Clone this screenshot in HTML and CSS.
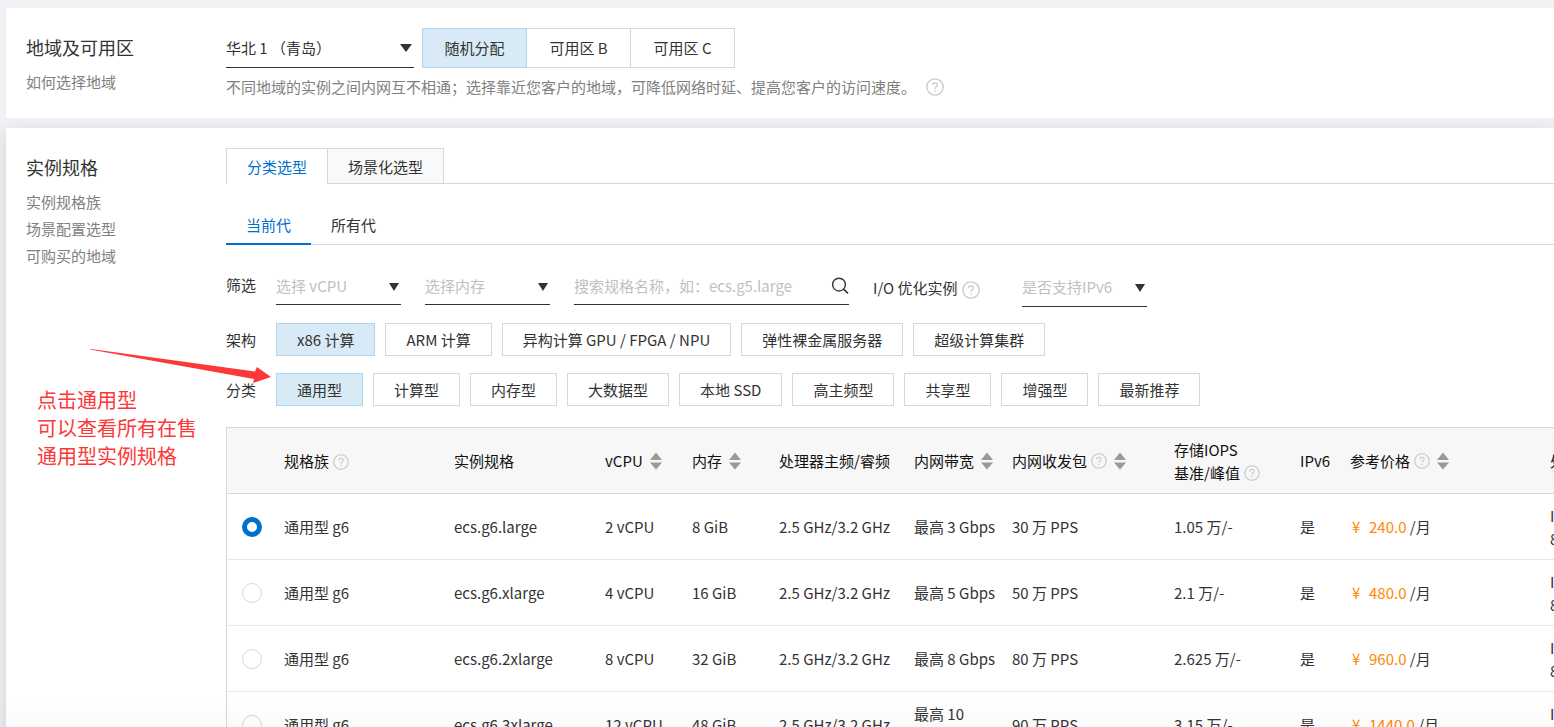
FILE: index.html
```html
<!DOCTYPE html>
<html lang="zh-CN">
<head>
    <meta charset="UTF-8">
    <meta name="viewport" content="width=device-width, initial-scale=1.0">
    <title>实例规格</title>
    <link rel="stylesheet" href="styles.css">
</head>
<body>
    <!-- Shared icons -->
    <svg class="sprite" aria-hidden="true">
        <symbol id="icon-help" viewBox="0 0 18 18">
            <circle cx="9" cy="9" r="8.2" fill="none" stroke="currentColor" stroke-width="1.3"/>
            <path d="M6.6 7.2c0-1.5 1-2.4 2.4-2.4s2.4.9 2.4 2.1c0 1.9-2.4 1.9-2.4 4" fill="none" stroke="currentColor" stroke-width="1.2"/>
            <circle cx="9" cy="13" r=".8" fill="currentColor"/>
        </symbol>
        <symbol id="icon-sort" viewBox="0 0 12 18">
            <path d="M6 .5l6 7.5H0zM6 17.5l6-7H0z" fill="currentColor"/>
        </symbol>
    </svg>

    <div class="page">
        <section class="panel region">
            <div class="panel-label">
                <h2>地域及可用区</h2>
                <a href="#">如何选择地域</a>
            </div>
            <div class="panel-body">
                <div class="region-row">
                    <div class="dropdown region-select">
                        <select aria-label="地域">
                            <option>华北 1 （青岛）</option>
                        </select>
                    </div>
                    <div class="zones">
                        <button type="button" class="zone active">随机分配</button>
                        <button type="button" class="zone">可用区 B</button>
                        <button type="button" class="zone">可用区 C</button>
                    </div>
                </div>
                <p class="hint">不同地域的实例之间内网互不相通；选择靠近您客户的地域，可降低网络时延、提高您客户的访问速度。<svg class="help"><use href="#icon-help"/></svg></p>
            </div>
        </section>

        <section class="panel spec">
            <div class="panel-label">
                <h2>实例规格</h2>
                <a href="#">实例规格族</a>
                <a href="#">场景配置选型</a>
                <a href="#">可购买的地域</a>
            </div>
            <div class="panel-body">
                <div class="tabs">
                    <button type="button" class="tab active">分类选型</button>
                    <button type="button" class="tab">场景化选型</button>
                </div>
                <div class="subtabs">
                    <button type="button" class="subtab active">当前代</button>
                    <button type="button" class="subtab">所有代</button>
                </div>

                <div class="filters">
                    <span class="row-label">筛选</span>
                    <div class="dropdown filter-select">
                        <select aria-label="选择 vCPU"><option>选择 vCPU</option></select>
                    </div>
                    <div class="dropdown filter-select">
                        <select aria-label="选择内存"><option>选择内存</option></select>
                    </div>
                    <div class="search">
                        <input type="text" aria-label="搜索规格名称" placeholder="搜索规格名称，如：ecs.g5.large">
                        <svg class="search-icon" viewBox="0 0 18 18">
                            <circle cx="8" cy="7.6" r="6.4" fill="none" stroke="#333" stroke-width="1.4"/>
                            <path d="M12.6 12.2l4.4 4.2" stroke="#333" stroke-width="1.6"/>
                        </svg>
                    </div>
                    <span class="io">I/O 优化实例<svg class="help"><use href="#icon-help"/></svg></span>
                    <div class="dropdown filter-select ipv6">
                        <select aria-label="是否支持IPv6"><option>是否支持IPv6</option></select>
                    </div>
                </div>

                <div class="options">
                    <span class="row-label">架构</span>
                    <button type="button" class="option active">x86 计算</button>
                    <button type="button" class="option">ARM 计算</button>
                    <button type="button" class="option">异构计算 GPU / FPGA / NPU</button>
                    <button type="button" class="option">弹性裸金属服务器</button>
                    <button type="button" class="option">超级计算集群</button>
                </div>
                <div class="options">
                    <span class="row-label">分类</span>
                    <button type="button" class="option active">通用型</button>
                    <button type="button" class="option">计算型</button>
                    <button type="button" class="option">内存型</button>
                    <button type="button" class="option">大数据型</button>
                    <button type="button" class="option">本地 SSD</button>
                    <button type="button" class="option">高主频型</button>
                    <button type="button" class="option">共享型</button>
                    <button type="button" class="option">增强型</button>
                    <button type="button" class="option">最新推荐</button>
                </div>

                <div class="table-wrap">
                    <table>
                        <colgroup>
                            <col class="c-radio"><col class="c-family"><col class="c-type"><col class="c-num"><col class="c-num">
                            <col class="c-cpu"><col class="c-band"><col class="c-pps"><col class="c-iops"><col class="c-ipv6">
                            <col class="c-price"><col class="c-model">
                        </colgroup>
                        <thead>
                            <tr>
                                <th></th>
                                <th>规格族<svg class="help small"><use href="#icon-help"/></svg></th>
                                <th>实例规格</th>
                                <th>vCPU<svg class="sort"><use href="#icon-sort"/></svg></th>
                                <th>内存<svg class="sort"><use href="#icon-sort"/></svg></th>
                                <th>处理器主频/睿频</th>
                                <th>内网带宽<svg class="sort"><use href="#icon-sort"/></svg></th>
                                <th>内网收发包<svg class="help small"><use href="#icon-help"/></svg><svg class="sort"><use href="#icon-sort"/></svg></th>
                                <th>存储IOPS<br>基准/峰值<svg class="help small"><use href="#icon-help"/></svg></th>
                                <th>IPv6</th>
                                <th>参考价格<svg class="help small"><use href="#icon-help"/></svg><svg class="sort"><use href="#icon-sort"/></svg></th>
                                <th>处理器型号</th>
                            </tr>
                        </thead>
                        <tbody>
                            <tr>
                                <td><input type="radio" name="spec" aria-label="ecs.g6.large" checked></td>
                                <td>通用型 g6</td>
                                <td>ecs.g6.large</td>
                                <td>2 vCPU</td>
                                <td>8 GiB</td>
                                <td>2.5 GHz/3.2 GHz</td>
                                <td>最高 3 Gbps</td>
                                <td>30 万 PPS</td>
                                <td>1.05 万/-</td>
                                <td>是</td>
                                <td><span class="price"><span class="yen">¥</span>240.0</span> /月</td>
                                <td>Intel Xeon(Cascade Lake) Platinum<br>8269CY</td>
                            </tr>
                            <tr>
                                <td><input type="radio" name="spec" aria-label="ecs.g6.xlarge"></td>
                                <td>通用型 g6</td>
                                <td>ecs.g6.xlarge</td>
                                <td>4 vCPU</td>
                                <td>16 GiB</td>
                                <td>2.5 GHz/3.2 GHz</td>
                                <td>最高 5 Gbps</td>
                                <td>50 万 PPS</td>
                                <td>2.1 万/-</td>
                                <td>是</td>
                                <td><span class="price"><span class="yen">¥</span>480.0</span> /月</td>
                                <td>Intel Xeon(Cascade Lake) Platinum<br>8269CY</td>
                            </tr>
                            <tr>
                                <td><input type="radio" name="spec" aria-label="ecs.g6.2xlarge"></td>
                                <td>通用型 g6</td>
                                <td>ecs.g6.2xlarge</td>
                                <td>8 vCPU</td>
                                <td>32 GiB</td>
                                <td>2.5 GHz/3.2 GHz</td>
                                <td>最高 8 Gbps</td>
                                <td>80 万 PPS</td>
                                <td>2.625 万/-</td>
                                <td>是</td>
                                <td><span class="price"><span class="yen">¥</span>960.0</span> /月</td>
                                <td>Intel Xeon(Cascade Lake) Platinum<br>8269CY</td>
                            </tr>
                            <tr>
                                <td><input type="radio" name="spec" aria-label="ecs.g6.3xlarge"></td>
                                <td>通用型 g6</td>
                                <td>ecs.g6.3xlarge</td>
                                <td>12 vCPU</td>
                                <td>48 GiB</td>
                                <td>2.5 GHz/3.2 GHz</td>
                                <td>最高 10 Gbps</td>
                                <td>90 万 PPS</td>
                                <td>3.15 万/-</td>
                                <td>是</td>
                                <td><span class="price"><span class="yen">¥</span>1440.0</span> /月</td>
                                <td>Intel Xeon(Cascade Lake) Platinum<br>8269CY</td>
                            </tr>
                        </tbody>
                    </table>
                </div>
            </div>

            <!-- Red callout pointing at the 通用型 button -->
            <div class="callout">
                <svg class="callout-arrow" viewBox="0 0 182 36">
                    <path d="M0 .5L1 0 165 22.5 167 18 181 28 163 34 164 30Z" fill="#fc3838"/>
                </svg>
                <p>点击通用型<br>可以查看所有在售<br>通用型实例规格</p>
            </div>
        </section>
    </div>
    <div class="bottom-shade"></div>
</body>
</html>
```

FILE: styles.css
```css
* {
    box-sizing: border-box;
}
body {
    margin: 0;
    background-color: #eff1f5;
    color: #333;
    font-family: "Noto Sans CJK SC", sans-serif;
    font-size: 15px;
    line-height: 23px;
}
button, input, select {
    font: inherit;
    color: inherit;
}
button {
    cursor: pointer;
    background: white;
    white-space: nowrap;
}
a {
    color: #808080;
    text-decoration: none;
}
.sprite {
    display: none;
}
.page {
    height: 100vh;
    padding: 8px 0 0 6px;
    overflow: hidden;
}
.panel {
    display: grid;
    grid-template-columns: 200px minmax(0, 1fr);
    position: relative;
    padding: 20px 0 20px 20px;
    background: white;
}
.region {
    z-index: 1;
    margin-bottom: 10px;
}
.spec {
    box-shadow: 0 4px 16px rgba(0, 0, 0, 0.12);
}
.panel-label h2 {
    margin: 0 0 2px;
    font-size: 18px;
    font-weight: normal;
    line-height: 38px;
}
.panel-label a {
    display: block;
    line-height: 27px;
}

/* Dropdowns */
.dropdown {
    position: relative;
    border-bottom: 1px solid #333;
}
.dropdown select {
    width: 100%;
    height: 100%;
    padding: 0;
    border: none;
    background: none;
    appearance: none;
}
.dropdown::after {
    content: "";
    position: absolute;
    top: 50%;
    right: 2px;
    margin-top: -4px;
    border: 6px solid transparent;
    border-top: 8px solid #333;
    border-bottom: none;
    pointer-events: none;
}
.region-row {
    display: flex;
    gap: 8px;
}
.region-select {
    width: 188px;
    height: 40px;
}
.zones {
    display: flex;
}
.zone {
    width: 105px;
    height: 40px;
    padding: 0 0 2px;
    border: 1px solid #d8d8d8;
}
.zone + .zone {
    margin-left: -1px;
}
.zone.active, .option.active {
    position: relative;
    border-color: #b0d4ee;
    background: #d8eaf6;
}
.hint {
    display: flex;
    align-items: center;
    margin: 8px 0 0;
    color: #808080;
    line-height: 22px;
}
.hint .help {
    margin-left: 10px;
}
.help {
    flex: none;
    width: 18px;
    height: 18px;
    color: #c8c8c8;
    vertical-align: middle;
}
.help.small {
    width: 16px;
    height: 16px;
    margin-bottom: 2px;
    margin-left: 4px;
}
.sort {
    width: 12px;
    height: 18px;
    margin-bottom: 2px;
    margin-left: 7px;
    color: #999;
    vertical-align: middle;
}

/* Tabs */
.tabs {
    display: flex;
    height: 36px;
    border-bottom: 1px solid #d8d8d8;
}
.tab {
    height: 36px;
    padding: 0 20px;
    border: 1px solid #d8d8d8;
    background: #f9f9f9;
}
.tab + .tab {
    margin-left: -1px;
}
.tab.active {
    border-bottom-color: white;
    background: white;
    color: #0070cc;
}
.subtabs {
    display: flex;
    height: 39px;
    margin-top: 22px;
    border-bottom: 1px solid #d8d8d8;
}
.subtab {
    height: 39px;
    padding: 0 20px;
    border: none;
    border-bottom: 2px solid transparent;
    background: none;
}
.subtab.active {
    border-bottom-color: #0070cc;
    color: #0070cc;
}

/* Filters */
.row-label {
    width: 50px;
    flex: none;
}
.filters {
    display: flex;
    align-items: flex-start;
    height: 37px;
    margin-top: 25px;
    line-height: 30px;
}
.filter-select {
    width: 125px;
    height: 35px;
    margin-right: 24px;
    color: #c0c0c0;
}
.dropdown.filter-select select {
    padding-bottom: 2px;
}
.filter-select.ipv6 {
    height: 37px;
    margin: 0;
}
.filter-select::after {
    right: 2px;
    border-width: 8px 5px 0;
}
.search {
    display: flex;
    align-items: center;
    width: 275px;
    height: 35px;
    margin-right: 24px;
    padding-bottom: 2px;
    border-bottom: 1px solid #333;
}
.search input {
    flex: 1;
    min-width: 0;
    padding: 0;
    border: none;
    outline: none;
}
.search input::placeholder {
    color: #c0c0c0;
}
.search-icon {
    width: 18px;
    height: 18px;
}
.io {
    width: 149px;
    line-height: 35px;
}
.io .help {
    margin-left: 4px;
}
.options {
    display: flex;
    align-items: center;
    gap: 10px;
    margin-top: 17px;
}
.filters + .options {
    margin-top: 16px;
}
.options .row-label {
    width: 40px;
}
.option {
    height: 33px;
    padding: 0 20px;
    border: 1px solid #d8d8d8;
}

/* Instance table */
.table-wrap {
    margin-top: 21px;
    overflow: hidden;
    border-top: 1px solid #d8d8d8;
    border-left: 1px solid #d8d8d8;
}
table {
    width: 1610px;
    table-layout: fixed;
    border-collapse: separate;
    border-spacing: 0;
}
th, td {
    height: 66px;
    padding: 0 4px 0 8px;
    border-bottom: 1px solid #e8e8e8;
    text-align: left;
    font-weight: normal;
}
th {
    border-color: #d8d8d8;
    background: #f7f7f7;
    color: #111;
    white-space: nowrap;
}
.c-radio { width: 49px; }
.c-family { width: 170px; }
.c-type { width: 151px; }
.c-num { width: 87px; }
.c-cpu { width: 135px; }
.c-band { width: 98px; }
.c-pps { width: 162px; }
.c-iops { width: 126px; }
.c-ipv6 { width: 50px; }
.c-price { width: 200px; }
.c-model { width: 295px; }

input[type="radio"] {
    display: block;
    width: 20px;
    height: 20px;
    margin: 0 0 0 7px;
    border: 1px solid #d8d8d8;
    border-radius: 50%;
    background: white;
    appearance: none;
}
input[type="radio"]:checked {
    border: 5px solid #0070cc;
}
.price {
    color: #ff8a00;
}
.yen {
    display: inline-block;
    width: 19px;
    padding-left: 2px;
}

/* Callout drawn over the panel */
.callout {
    position: absolute;
    top: 221px;
    left: 31px;
    color: #fc3838;
    pointer-events: none;
}
.callout-arrow {
    display: block;
    width: 182px;
    height: 36px;
    margin-left: 53px;
}
.callout p {
    margin: 1px 0 0;
    font-size: 20px;
    line-height: 28px;
}
.bottom-shade {
    position: fixed;
    right: 0;
    bottom: 0;
    left: 0;
    height: 30px;
    background: linear-gradient(transparent, rgba(0, 0, 0, 0.02));
    pointer-events: none;
}
```
